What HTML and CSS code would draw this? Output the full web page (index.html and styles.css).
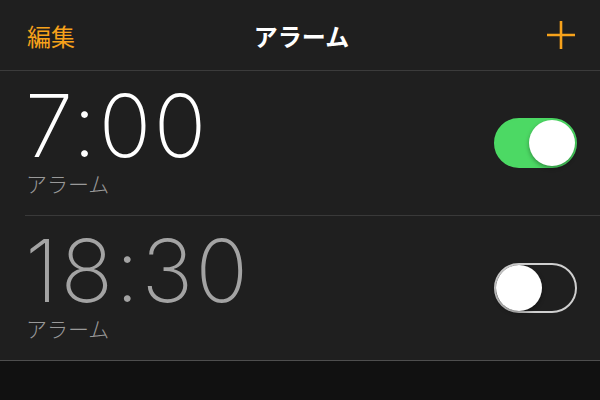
FILE: index.html
```html
<!DOCTYPE html>
<html lang="ja">
<head>
<meta charset="utf-8">
<link rel="stylesheet" href="styles.css">
</head>
<body>
<div class="screen">
  <header class="nav">
    <span class="nav-edit">編集</span>
    <span class="nav-title">アラーム</span>
    <span class="nav-add" aria-label="追加">
      <svg width="30" height="30" viewBox="0 0 30 30"><path d="M15 1V29M1 15H29" stroke="#f7a21b" stroke-width="2.6" fill="none"/></svg>
    </span>
  </header>
  <ul class="list">
    <li class="row">
      <div class="info">
        <div class="time on">7:00</div>
        <div class="label">アラーム</div>
      </div>
      <div class="toggle is-on"><span class="knob"></span></div>
    </li>
    <li class="row">
      <div class="info">
        <div class="time off">18:30</div>
        <div class="label">アラーム</div>
      </div>
      <div class="toggle"><span class="knob"></span></div>
    </li>
  </ul>
  <div class="bottom"></div>
</div>
</body>
</html>
```

FILE: styles.css
```css
html, body {
  margin: 0;
  padding: 0;
  background: #1f1f1f;
}
.screen {
  width: 600px;
  height: 400px;
  overflow: hidden;
  display: flex;
  flex-direction: column;
  background: #1f1f1f;
  font-family: "Noto Sans CJK JP", "Noto Sans", sans-serif;
}
.nav {
  height: 70px;
  flex: none;
  border-bottom: 1px solid #3b3b3b;
  display: grid;
  grid-template-columns: 1fr auto 1fr;
  align-items: center;
  padding: 0 24px 0 27px;
}
.nav-edit {
  color: #f7a21b;
  font-size: 24px;
  justify-self: start;
}
.nav-title {
  color: #ffffff;
  font-size: 24px;
  font-weight: 700;
}
.nav-add {
  justify-self: end;
  display: flex;
}
.list {
  list-style: none;
  margin: 0;
  padding: 0 0 0 25px;
}
.row {
  height: 144px;
  display: flex;
  align-items: center;
  justify-content: space-between;
  padding-right: 23px;
  border-bottom: 1px solid #393939;
}
.row:last-child {
  border-bottom-color: #4e4e4e;
  margin-left: -25px;
  padding-left: 25px;
}
.info {
  align-self: flex-start;
  padding-top: 12px;
  display: flex;
  flex-direction: column;
}
.time {
  font-family: "Inter", "Liberation Sans", sans-serif;
  font-weight: 200;
  font-size: 87px;
  line-height: 86px;
  letter-spacing: 2.3px;
}
.time.on { color: #ffffff; }
.time.off { color: #a3a3a3; }
.label {
  color: #999999;
  font-size: 21px;
  line-height: 26px;
  font-weight: 300;
  padding-left: 1px;
  padding-top: 1px;
}
.toggle {
  width: 83px;
  height: 50px;
  border-radius: 25px;
  box-sizing: border-box;
  position: relative;
  border: 2px solid #cfcfcf;
  background: #1f1f1f;
}
.toggle.is-on {
  background: #4cd964;
  border-color: #4cd964;
}
.knob {
  position: absolute;
  top: 0;
  left: 0;
  width: 46px;
  height: 46px;
  border-radius: 50%;
  background: #ffffff;
  box-shadow: 0 2px 4px rgba(0,0,0,0.35);
}
.toggle.is-on .knob {
  left: auto;
  right: 0;
}
.bottom {
  flex: 1;
  background: #111111;
}
```
